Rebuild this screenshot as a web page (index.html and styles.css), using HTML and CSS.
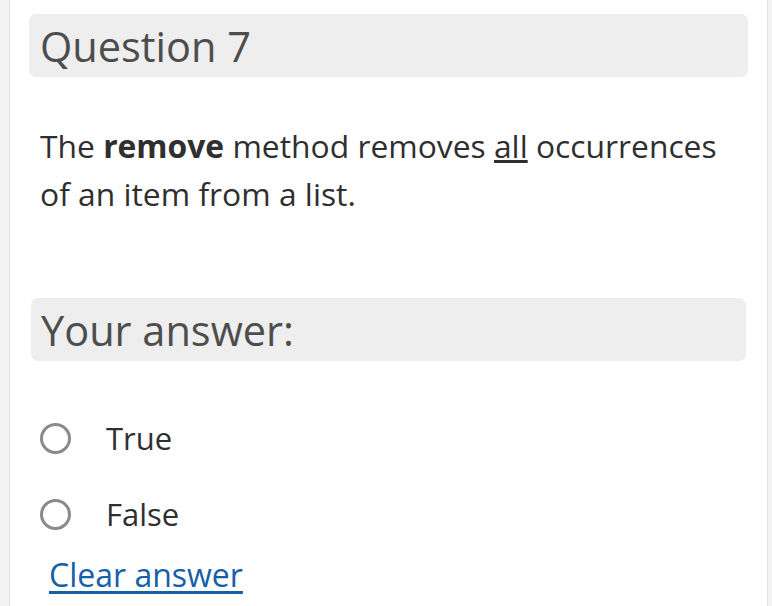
FILE: index.html
```
<!DOCTYPE html>
<html>
<head>
<meta charset="utf-8">
<link rel="stylesheet" href="styles.css">
</head>
<body>
<div class="page">
  <div class="panel">
    <div class="qhead">Question 7</div>
    <p class="qtext">The <b>remove</b> method removes <u>all</u> occurrences of an item from a list.</p>
    <div class="ahead">Your answer:</div>
    <div class="options">
      <label class="opt"><span class="radio"></span><span class="lbl">True</span></label>
      <label class="opt"><span class="radio"></span><span class="lbl">False</span></label>
    </div>
    <a class="clear" href="#">Clear answer</a>
  </div>
</div>
</body>
</html>
```
FILE: styles.css
```
html, body {
  margin: 0;
  padding: 0;
  background: #f3f3f3;
}
body {
  font-family: "Open Sans", "Liberation Sans", sans-serif;
  color: #333;
  width: 772px;
  height: 606px;
  overflow: hidden;
}
.page {
  padding-left: 9px;
  padding-right: 4px;
  height: 606px;
}
.panel {
  background: #fff;
  border-left: 1px solid #e2e2e2;
  border-right: 1px solid #e2e2e2;
  height: 606px;
  padding: 14px 19px 0 19px;
  box-sizing: border-box;
}
.qhead {
  background: #eeeeee;
  border-radius: 7px;
  height: 63px;
  font-size: 41.5px;
  line-height: 65px;
  color: #4d4d4d;
  padding-left: 11px;
}
.qtext {
  margin: 45px 0 0 11px;
  font-size: 31.8px;
  line-height: 48px;
  color: #2f2f2f;
}
.qtext b { font-weight: 700; }
.ahead {
  margin: 80px 2px 0 2px;
  background: #eeeeee;
  border-radius: 7px;
  height: 63px;
  font-size: 41.5px;
  line-height: 65px;
  color: #4d4d4d;
  padding-left: 10px;
}
.options {
  margin-top: 60px;
  display: flex;
  flex-direction: column;
  gap: 42px;
}
.opt {
  display: flex;
  align-items: center;
  padding-left: 11px;
  font-size: 31px;
  line-height: 34px;
  color: #2f2f2f;
}
.radio {
  width: 25px;
  height: 25px;
  border: 3px solid #8a8a8a;
  border-radius: 50%;
  margin-right: 35px;
  flex: none;
}
.clear {
  display: inline-block;
  margin: 24px 0 0 20px;
  font-size: 32px;
  line-height: 40px;
  color: #1560a8;
  text-decoration: underline;
  text-underline-offset: 4px;
}
```
